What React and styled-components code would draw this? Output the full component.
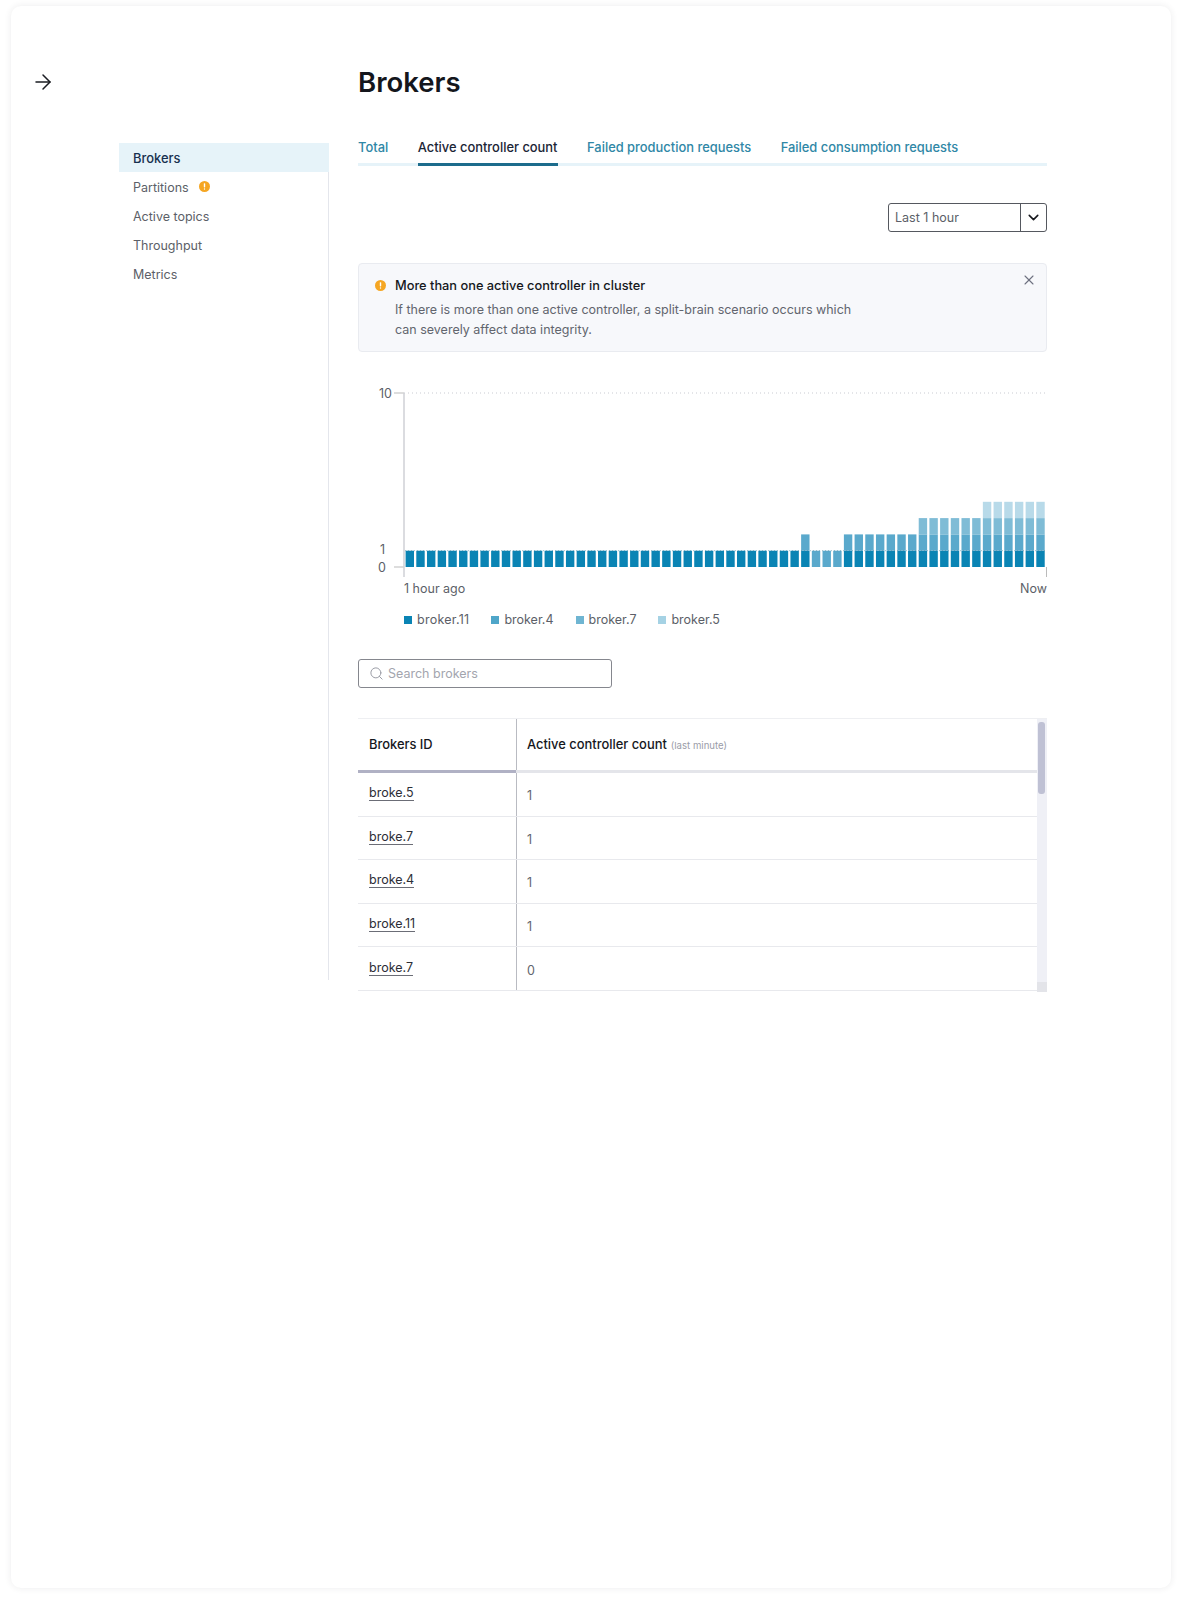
import React from 'react'
import styled, { createGlobalStyle } from 'styled-components'
import { ArrowRight, ChevronDown, Search, X } from 'lucide-react'

const GlobalStyle = createGlobalStyle`
  html, body {
    margin: 0;
    background: #fff;
    font-family: Inter, "Noto Sans", sans-serif;
    color: #16181d;
  }
`

const Page = styled.div`
  padding: 6px 10px 12px 11px;
`

const Card = styled.div`
  box-sizing: border-box;
  width: 1160px;
  height: 1582px;
  padding: 57px 124px 0 0;
  border-radius: 10px;
  box-shadow: 0 0 7px rgba(40, 40, 60, 0.09);
  display: grid;
  grid-template-columns: 108px 210px 1fr;
  grid-template-rows: 74px auto;
  align-content: start;
`

const BackCell = styled.div`
  padding-left: 20px;
  height: 38px;
  display: flex;
  align-items: center;
  color: #1a1c22;
`

const Title = styled.h1`
  grid-column: 3;
  margin: 0;
  padding-left: 29px;
  font-size: 27.5px;
  line-height: 38px;
  font-weight: 600;
  color: #14161c;
`

const Side = styled.nav`
  grid-column: 2;
  grid-row: 2;
  height: 837px;
  margin-top: 6px;
  border-right: 1px solid #e4e6ec;
`

const SideItem = styled.div`
  box-sizing: border-box;
  height: 29px;
  margin-right: ${({ $active }) => ($active ? '-1px' : '0')};
  padding: 2px 0 0 14px;
  display: flex;
  align-items: center;
  gap: 10px;
  font-size: ${({ $active }) => ($active ? '12.9px' : '12.5px')};
  font-weight: ${({ $active }) => ($active ? 500 : 400)};
  color: ${({ $active }) => ($active ? '#17304f' : '#5c5f68')};
  background: ${({ $active }) => ($active ? '#e6f3f9' : 'transparent')};

  svg {
    margin-top: -2px;
  }
`

const Main = styled.main`
  grid-column: 3;
  grid-row: 2;
  padding-left: 29px;
`

const Tabs = styled.div`
  display: flex;
  gap: 29.5px;
  height: 29px;
  box-sizing: border-box;
  border-bottom: 3px solid #e6f3f9;
`

const Tab = styled.div`
  height: 29px;
  box-sizing: border-box;
  border-bottom: 3px solid ${({ $active }) => ($active ? '#1c6c8c' : 'transparent')};
  font-size: 12.9px;
  line-height: 22px;
  font-weight: 500;
  color: ${({ $active }) => ($active ? '#1b2536' : '#2f87a6')};
`

const SelectRow = styled.div`
  display: flex;
  justify-content: flex-end;
  margin-top: 37px;
`

const Select = styled.div`
  box-sizing: border-box;
  width: 159px;
  height: 29px;
  border: 1px solid #55585f;
  border-radius: 3px;
  display: flex;
  font-size: 12.5px;
  color: #5c5f68;
`

const SelectValue = styled.div`
  flex: 1;
  padding-left: 6px;
  line-height: 27px;
`

const SelectArrow = styled.div`
  width: 25px;
  border-left: 1px solid #55585f;
  display: flex;
  align-items: center;
  justify-content: center;
  color: #16181d;
`

const Alert = styled.div`
  position: relative;
  box-sizing: border-box;
  height: 89px;
  margin-top: 31px;
  padding: 12px 16px;
  border: 1px solid #e9ebf0;
  border-radius: 4px;
  background: #f7f8fb;
  display: flex;
  gap: 9px;
`

const AlertIconWrap = styled.div`
  height: 19px;
  display: flex;
  align-items: center;
`

const AlertTitle = styled.div`
  font-size: 12.8px;
  line-height: 20px;
  font-weight: 500;
  color: #16181d;
  margin-bottom: 4px;
`

const AlertBody = styled.div`
  width: 470px;
  font-size: 12.5px;
  line-height: 20px;
  color: #62656e;
`

const AlertClose = styled.div`
  position: absolute;
  top: 8px;
  right: 9px;
  display: flex;
  color: #6d7080;
`

const Chart = styled.svg`
  display: block;
  margin-top: 31px;
`

const AxisText = styled.text`
  font-size: 12.5px;
  fill: #5c5f68;
`

const XLabels = styled.div`
  display: flex;
  justify-content: space-between;
  padding-left: 46px;
  margin-top: 1px;
  font-size: 12.5px;
  line-height: 20px;
  color: #5c5f68;
`

const Legend = styled.div`
  display: flex;
  gap: 22px;
  padding-left: 46px;
  margin-top: 11px;
  font-size: 12.5px;
  line-height: 20px;
  color: #5c5f68;
`

const LegendItem = styled.div`
  display: flex;
  align-items: center;
  gap: 5px;

  &:first-child {
    letter-spacing: 0.25px;
  }
`

const Swatch = styled.span`
  width: 8px;
  height: 8px;
  background: ${({ $color }) => $color};
`

const SearchBox = styled.div`
  box-sizing: border-box;
  width: 254px;
  height: 29px;
  margin-top: 29px;
  padding-left: 10px;
  border: 1px solid #85878e;
  border-radius: 3px;
  display: flex;
  align-items: center;
  gap: 4px;
  font-size: 12.5px;
  color: #a3a5ae;
`

const TableWrap = styled.div`
  position: relative;
  box-sizing: border-box;
  height: 274px;
  margin-top: 30px;
  padding-right: 10px;
  border-top: 1px solid #eeeff2;
`

const Row = styled.div`
  display: grid;
  grid-template-columns: 158px 1fr;
  box-sizing: border-box;
  height: ${({ $head }) => ($head ? '51px' : '43.6px')};
  border-bottom: ${({ $head }) => ($head ? 'none' : '1px solid #e8e9ed')};
`

const HeadBar = styled.div`
  height: 3px;
  background: linear-gradient(to right, #b0b1c4 158px, #e4e5ea 158px);
`

const IdCell = styled.div`
  padding-left: 11px;
  display: flex;
  align-items: center;
  font-size: 12.5px;
`

const ValueCell = styled.div`
  box-sizing: border-box;
  padding: ${({ $head }) => ($head ? '0' : '3px')} 0 0 10px;
  border-left: 1px solid #b9bbc2;
  display: flex;
  align-items: center;
  font-size: 12.5px;
  color: #62656e;
`

const HeadText = styled.span`
  font-size: 12.9px;
  font-weight: 500;
  color: #16181d;
`

const HeadNote = styled.span`
  margin-left: 4px;
  margin-top: 2px;
  font-size: 9.6px;
  color: #9a9ca8;
`

const BrokerLink = styled.a`
  margin-top: -2px;
  color: #2c2e36;
  text-decoration: none;
  border-bottom: 1px solid #6b6d76;
  line-height: 15px;
`

const ScrollTrack = styled.div`
  position: absolute;
  top: 0;
  right: 0;
  bottom: 0;
  width: 10px;
  background: #eff0f6;
`

const ScrollThumb = styled.div`
  width: 7px;
  height: 72px;
  margin: 3px 0 0 1px;
  border-radius: 3px;
  background: #bfc1d4;
`

const ScrollEnd = styled.div`
  position: absolute;
  bottom: 0;
  width: 10px;
  height: 10px;
  background: #e3e4e9;
`

const WarnIcon = () => (
  <svg width="11" height="11" viewBox="0 0 11 11">
    <circle cx="5.5" cy="5.5" r="5.5" fill="#f5a623" />
    <rect x="4.8" y="2.2" width="1.4" height="4.2" rx="0.6" fill="#fff" />
    <rect x="4.8" y="7.3" width="1.4" height="1.4" rx="0.7" fill="#fff" />
  </svg>
)

const levels = ['#0a84b4', '#5aa9cc', '#7fbcd6', '#b8dae9']
const legend = [
  ['broker.11', '#0a84b4'],
  ['broker.4', '#4fa6c9'],
  ['broker.7', '#6fb5d2'],
  ['broker.5', '#a5d2e4'],
]

// one entry per minute, number of brokers reporting an active controller
const bars = Array.from({ length: 60 }, (_, i) => {
  if (i < 37) return { count: 1 }
  if (i === 37) return { count: 2 }
  if (i < 41) return { count: 1, faded: true }
  if (i < 48) return { count: 2 }
  if (i < 54) return { count: 3 }
  return { count: 4 }
})

const rows = [
  ['broke.5', 1],
  ['broke.7', 1],
  ['broke.4', 1],
  ['broke.11', 1],
  ['broke.7', 0],
]

const BASE = 184
const LEVEL = 16.3

const BarChart = () => (
  <Chart width="689" height="195" viewBox="0 0 689 195">
    <line x1="46" y1="10" x2="689" y2="10" stroke="#c9cbd2" strokeDasharray="1 3" />
    <line x1="36" y1="10" x2="46" y2="10" stroke="#bbb" />
    <line x1="36" y1={BASE} x2="46" y2={BASE} stroke="#bbb" />
    <line x1="46" y1="10" x2="46" y2="194" stroke="#cfd0d6" strokeWidth="1.5" />
    <line x1="688.5" y1={BASE} x2="688.5" y2="194" stroke="#bbb" />
    <AxisText x="34" y="14.5" textAnchor="end">10</AxisText>
    <AxisText x="27" y="171" textAnchor="end">1</AxisText>
    <AxisText x="28" y="189" textAnchor="end">0</AxisText>
    {bars.map(({ count, faded }, i) =>
      Array.from({ length: count }, (_, level) => (
        <rect
          key={`${i}-${level}`}
          x={47.6 + i * 10.69}
          y={BASE - (level + 1) * LEVEL}
          width="8.4"
          height={LEVEL}
          fill={faded ? levels[1] : levels[level]}
        />
      ))
    )}
    <line x1="47" y1={BASE - LEVEL} x2="688" y2={BASE - LEVEL} stroke="#4d7f96" strokeOpacity="0.5" strokeDasharray="1 2" />
  </Chart>
)

export default function App() {
  return (
    <Page>
      <GlobalStyle />
      <Card>
        <BackCell>
          <ArrowRight size={24} strokeWidth={1.5} />
        </BackCell>
        <Title>Brokers</Title>
        <Side>
          <SideItem $active>Brokers</SideItem>
          <SideItem>Partitions <WarnIcon /></SideItem>
          <SideItem>Active topics</SideItem>
          <SideItem>Throughput</SideItem>
          <SideItem>Metrics</SideItem>
        </Side>
        <Main>
          <Tabs>
            <Tab>Total</Tab>
            <Tab $active>Active controller count</Tab>
            <Tab>Failed production requests</Tab>
            <Tab>Failed consumption requests</Tab>
          </Tabs>
          <SelectRow>
            <Select>
              <SelectValue>Last 1 hour</SelectValue>
              <SelectArrow>
                <ChevronDown size={17} strokeWidth={2.2} />
              </SelectArrow>
            </Select>
          </SelectRow>
          <Alert>
            <AlertIconWrap>
              <WarnIcon />
            </AlertIconWrap>
            <div>
              <AlertTitle>More than one active controller in cluster</AlertTitle>
              <AlertBody>
                If there is more than one active controller, a split-brain scenario occurs which can severely affect data integrity.
              </AlertBody>
            </div>
            <AlertClose>
              <X size={16} strokeWidth={1.6} />
            </AlertClose>
          </Alert>
          <BarChart />
          <XLabels>
            <span>1 hour ago</span>
            <span>Now</span>
          </XLabels>
          <Legend>
            {legend.map(([name, color]) => (
              <LegendItem key={name}>
                <Swatch $color={color} />
                {name}
              </LegendItem>
            ))}
          </Legend>
          <SearchBox>
            <Search size={15} strokeWidth={1.6} color="#9b9da6" />
            Search brokers
          </SearchBox>
          <TableWrap>
            <Row $head>
              <IdCell><HeadText>Brokers ID</HeadText></IdCell>
              <ValueCell $head>
                <HeadText>Active controller count</HeadText>
                <HeadNote>(last minute)</HeadNote>
              </ValueCell>
            </Row>
            <HeadBar />
            {rows.map(([id, count], i) => (
              <Row key={i}>
                <IdCell><BrokerLink href="#">{id}</BrokerLink></IdCell>
                <ValueCell>{count}</ValueCell>
              </Row>
            ))}
            <ScrollTrack>
              <ScrollThumb />
              <ScrollEnd />
            </ScrollTrack>
          </TableWrap>
        </Main>
      </Card>
    </Page>
  )
}
